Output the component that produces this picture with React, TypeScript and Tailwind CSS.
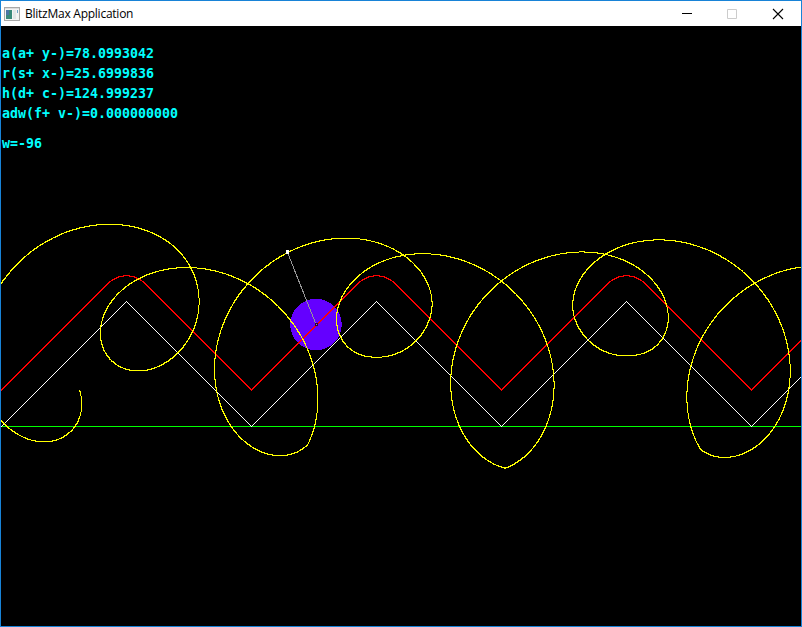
const R = 25.7;
const ARM = 78.1;
const HALF = 125;
const BASE = 400;
const RUN = HALF * Math.SQRT2 - R;
const ARC = (R * Math.PI) / 2;
const PERIOD = 2 * RUN + ARC;

// Wheel centre after rolling a distance s along the zigzag.
function centre(s: number): [number, number] {
  const n = Math.floor(s / PERIOD);
  const d = s - n * PERIOD;
  const x0 = n * 2 * HALF;
  const y0 = BASE - R * Math.SQRT2;
  if (d < RUN) return [x0 + d / Math.SQRT2, y0 - d / Math.SQRT2];
  if (d < RUN + ARC) {
    const t = (-3 * Math.PI) / 4 + (d - RUN) / R;
    return [x0 + HALF + R * Math.cos(t), BASE - HALF + R * Math.sin(t)];
  }
  const e = PERIOD - d;
  return [x0 + 2 * HALF - e / Math.SQRT2, y0 - e / Math.SQRT2];
}

function tip(s: number): [number, number] {
  const [x, y] = centre(s);
  return [x + ARM * Math.cos(s / R), y + ARM * Math.sin(s / R)];
}

// Unit cells nearest to a set of points, merged into one path.
function plot(points: [number, number][]) {
  const seen = new Set<string>();
  let d = "";
  for (const [px, py] of points) {
    const x = Math.round(px);
    const y = Math.round(py);
    const key = x + "," + y;
    if (x < 0 || x > 799 || seen.has(key)) continue;
    seen.add(key);
    d += `M${x} ${y}h1v1h-1z`;
  }
  return d;
}

const steps = Array.from({ length: 15200 }, (_, i) => i * 0.08);
const trace = plot(steps.map(tip));
const rail = plot(steps.map(centre));
const zigzag = plot(
  Array.from({ length: 800 }, (_, x) => {
    const m = x % 250;
    return [x, BASE - (m <= 125 ? m : 250 - m)] as [number, number];
  }),
);

const readouts = ["a(a+ y-)=78.0993042", "r(s+ x-)=25.6999836", "h(d+ c-)=124.999237", "adw(f+ v-)=0.000000000"];

function TitleBar() {
  return (
    <header className="flex h-[25px] shrink-0 items-center bg-white">
      <svg className="ml-[3px] shrink-0" width="16" height="14" viewBox="0 0 16 14" shapeRendering="crispEdges">
        <path d="M0 0h16v14H0z" fill="#a8a8a8" />
        <path d="M1 2h14v11H1z" fill="#f4f4f4" />
        <path d="M1 1h14v1H1z" fill="#dcdcdc" />
        <path d="M2 3h6v9H2z" fill="#39897a" />
        <path d="M2 3h3v5H2z" fill="#4b76a5" />
        <path d="M9 3h3v9H9z" fill="#e2e6e8" />
        <path d="M13 3h1v3h-1z" fill="#6ba5ca" />
      </svg>
      <h1 className="ml-[5px] grow whitespace-pre font-['Open_Sans','Noto_Sans',sans-serif] text-[12px] leading-[16px] tracking-[-0.25px] text-black">
        BlitzMax Application
      </h1>
      <svg className="mr-[17px] shrink-0" width="102" height="12" viewBox="0 0 102 12">
        <path d="M0 5h10v1H0z" fill="#000" shapeRendering="crispEdges" />
        <path d="M45.5 1.5h9v9h-9z" fill="none" stroke="#ccc" />
        <path d="M91 1l10 10M101 1L91 11" stroke="#000" strokeWidth="1.1" />
      </svg>
    </header>
  );
}

export default function App() {
  return (
    <div className="flex h-[627px] w-[802px] flex-col overflow-hidden border border-[#1883d7] bg-black">
      <TitleBar />
      <main className="relative h-[600px] w-[800px] shrink-0 overflow-hidden bg-black">
        <svg className="block" width="800" height="600" viewBox="0 0 800 600" shapeRendering="crispEdges">
          <circle cx="315" cy="298.5" r="25.8" fill="#6400ff" />
          <path d="M0 400h800v1H0z" fill="#0f0" />
          <path d={zigzag} fill="#fff" />
          <path d={rail} fill="#f00" />
          <path d={trace} fill="#ff0" />
          <path d="M286.5 226.5L315.5 299.5" stroke="#969696" />
          <path d="M285 224h3v4h-3z" fill="#fff" />
          <path d="M314 297h3v3h-3z" fill="#320032" />
          <path d="M315 298h1v1h-1z" fill="#969696" />
        </svg>
        <div className="absolute left-px top-[18px] whitespace-pre font-['DejaVu_Sans_Mono','Liberation_Mono',monospace] text-[13.29px] font-bold leading-[20px] text-[#0ff]">
          {readouts.map((line) => (
            <p key={line}>{line}</p>
          ))}
          <p className="mt-[10px]">w=-96</p>
        </div>
      </main>
    </div>
  );
}
